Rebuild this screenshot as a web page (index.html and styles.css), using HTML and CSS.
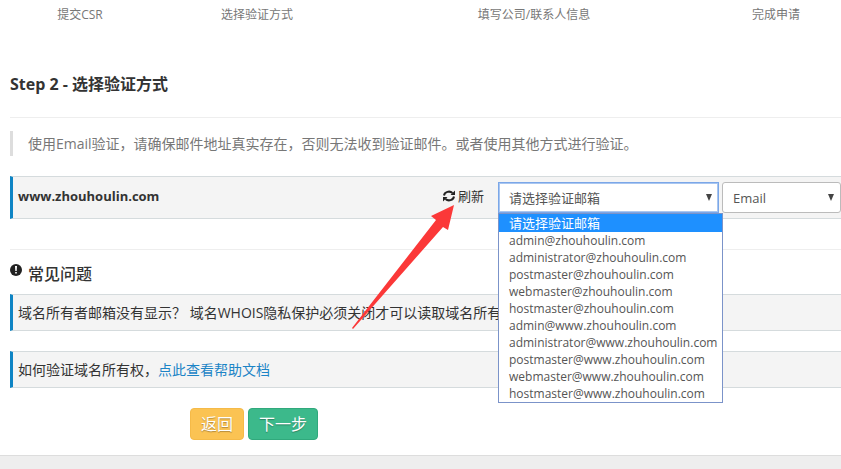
FILE: index.html
```html
<!DOCTYPE html>
<html lang="zh-CN">
<head>
    <meta charset="UTF-8">
    <meta name="viewport" content="width=device-width, initial-scale=1.0">
    <title>选择验证方式</title>
    <link rel="stylesheet" href="styles.css">
</head>
<body>
    <main class="page">
        <ol class="steps">
            <li>提交CSR</li>
            <li>选择验证方式</li>
            <li>填写公司/联系人信息</li>
            <li>完成申请</li>
        </ol>
        <div class="content">
            <h1>Step 2 - 选择验证方式</h1>
            <hr>
            <p class="tip">使用Email验证，请确保邮件地址真实存在，否则无法收到验证邮件。或者使用其他方式进行验证。</p>
            <form class="callout domain-row">
                <strong class="domain">www.zhouhoulin.com</strong>
                <div class="refresh-wrap">
                    <button type="button" class="refresh">
                        <svg class="icon" viewBox="0 0 12 12" aria-hidden="true"><path class="stroke" d="M1 5.500A5 4.500 0 0 1 9.500 3M11 6.500A5 4.500 0 0 1 2.500 9"/><path d="M12 .5V5H7.500zM0 11.500V7h4.500z"/></svg>
                        刷新
                    </button>
                    <svg class="pointer" viewBox="0 0 102 124" aria-hidden="true"><path d="M102 0L79 11L84 15L0 123L1 124L91 22L96 25Z"/></svg>
                </div>
                <div class="mailbox">
                    <select class="field active" aria-label="验证邮箱">
                        <option>请选择验证邮箱</option>
                    </select>
                    <ul class="options" role="listbox" aria-label="验证邮箱">
                        <li role="option" aria-selected="true">请选择验证邮箱</li>
                        <li role="option">admin@zhouhoulin.com</li>
                        <li role="option">administrator@zhouhoulin.com</li>
                        <li role="option">postmaster@zhouhoulin.com</li>
                        <li role="option">webmaster@zhouhoulin.com</li>
                        <li role="option">hostmaster@zhouhoulin.com</li>
                        <li role="option">admin@www.zhouhoulin.com</li>
                        <li role="option">administrator@www.zhouhoulin.com</li>
                        <li role="option">postmaster@www.zhouhoulin.com</li>
                        <li role="option">webmaster@www.zhouhoulin.com</li>
                        <li role="option">hostmaster@www.zhouhoulin.com</li>
                    </ul>
                </div>
                <div class="method">
                    <select class="field" aria-label="验证方式">
                        <option>Email</option>
                    </select>
                </div>
            </form>
            <hr>
            <h2>
                <svg class="icon" viewBox="0 0 12 12" aria-hidden="true"><circle cx="6" cy="6" r="6"/><path class="mark" d="M5 2h2l-.3 5H5.300zM5.200 8h1.600v1.600H5.200z"/></svg>
                常见问题
            </h2>
            <p class="callout">域名所有者邮箱没有显示？ 域名WHOIS隐私保护必须关闭才可以读取域名所有</p>
            <p class="callout">如何验证域名所有权，<a href="#">点此查看帮助文档</a></p>
            <div class="actions">
                <button type="button" class="btn back">返回</button>
                <button type="button" class="btn next">下一步</button>
            </div>
        </div>
    </main>
</body>
</html>
```
FILE: styles.css
```css
body {
    margin: 0;
    background: #eee;
    color: #333;
    font-family: "Open Sans", "Noto Sans CJK SC", sans-serif;
    font-size: 14px;
    line-height: 20px;
}
.page {
    background: #fff;
    border-bottom: 1px solid #ddd;
    overflow-x: clip;
}
.steps {
    display: grid;
    grid-template-columns: 160fr 194fr 360fr 124fr;
    margin: 0;
    padding: 5px 3px 4px 0;
    list-style: none;
    text-align: center;
    font-size: 12px;
    color: #777;
}
.content {
    padding: 45px 0 15px 10px;
}
h1, h2 {
    margin: 0;
    font-size: 16px;
    line-height: 20px;
}
h2 {
    display: flex;
    gap: 6px;
    margin-bottom: 10px;
    padding-top: 1px;
    font-weight: 500;
}
hr {
    margin: 23px 0 13px;
    border: 0;
    border-top: 1px solid #eee;
}
.tip {
    margin: 0 0 20px;
    padding: 3px 15px 2px;
    border-left: 3px solid #ddd;
    color: #777;
}
.callout {
    margin: 0 0 20px;
    padding: 8px 5px 7px;
    background: #f4f4f4;
    border: solid #d5dbdd;
    border-width: 1px 0;
    border-left: 3px solid #0e84c4;
    white-space: nowrap;
}
.domain-row {
    display: flex;
    margin-bottom: 30px;
    padding: 5px 0 5px 5px;
    line-height: 28px;
}
.domain {
    flex: 1;
    font-size: 13px;
}
.refresh-wrap {
    position: relative;
    margin-right: 14px;
}
.refresh {
    display: flex;
    align-items: center;
    gap: 3px;
    padding: 0;
    border: 0;
    background: none;
    color: #333;
    font: inherit;
    font-size: 13px;
    line-height: 28px;
    cursor: pointer;
}
.icon {
    width: 12px;
    height: 12px;
    fill: #222;
}
.stroke {
    fill: none;
    stroke: #222;
    stroke-width: 2;
}
.mark {
    fill: #fff;
}
/* red arrow pointing at the refresh button */
.pointer {
    position: absolute;
    z-index: 2;
    top: 23px;
    right: 30px;
    width: 102px;
    height: 124px;
    fill: #fb3838;
}
.mailbox {
    position: relative;
    width: 221px;
    margin-right: 3px;
}
.method {
    position: relative;
    width: 119px;
}
.mailbox::after, .method::after {
    content: "";
    position: absolute;
    top: 12px;
    right: 7px;
    border: solid transparent;
    border-width: 7px 3px 0;
    border-top-color: #444;
    pointer-events: none;
}
.field {
    display: block;
    width: 100%;
    height: 31px;
    padding: 0 10px;
    border: 1px solid #bbb;
    border-radius: 3px;
    background: #fff;
    color: #555;
    font: inherit;
    font-size: 13px;
    appearance: none;
}
.field.active {
    border-color: #7ba7e8;
    border-radius: 0;
    box-shadow: inset 0 0 0 1px #a9c6f0;
}
.options {
    position: absolute;
    z-index: 1;
    top: 31px;
    left: 0;
    box-sizing: border-box;
    margin: 0;
    padding: 0;
    min-width: 225px;
    border: 1px solid #7b93c9;
    background: #fff;
    color: #555;
    font-size: 12px;
    line-height: 17px;
    list-style: none;
}
.options li {
    padding: 0 2px 0 10px;
}
.options li[aria-selected] {
    background: #1e90ff;
    color: #fff;
    font-size: 13px;
    line-height: 18px;
}
a {
    color: #1c84c6;
    text-decoration: none;
}
.actions {
    display: flex;
    gap: 4px;
    padding-left: 180px;
}
.btn {
    padding: 5px 10px;
    border: 1px solid;
    border-radius: 4px;
    color: #fff;
    font: inherit;
    font-size: 16px;
    line-height: 20px;
    text-shadow: 0 1px 1px rgba(0, 0, 0, 0.3);
    cursor: pointer;
}
.back {
    background: #fbc353;
    border-color: #f5ba48;
}
.next {
    background: #3cb98b;
    border-color: #30a97c;
}
```
